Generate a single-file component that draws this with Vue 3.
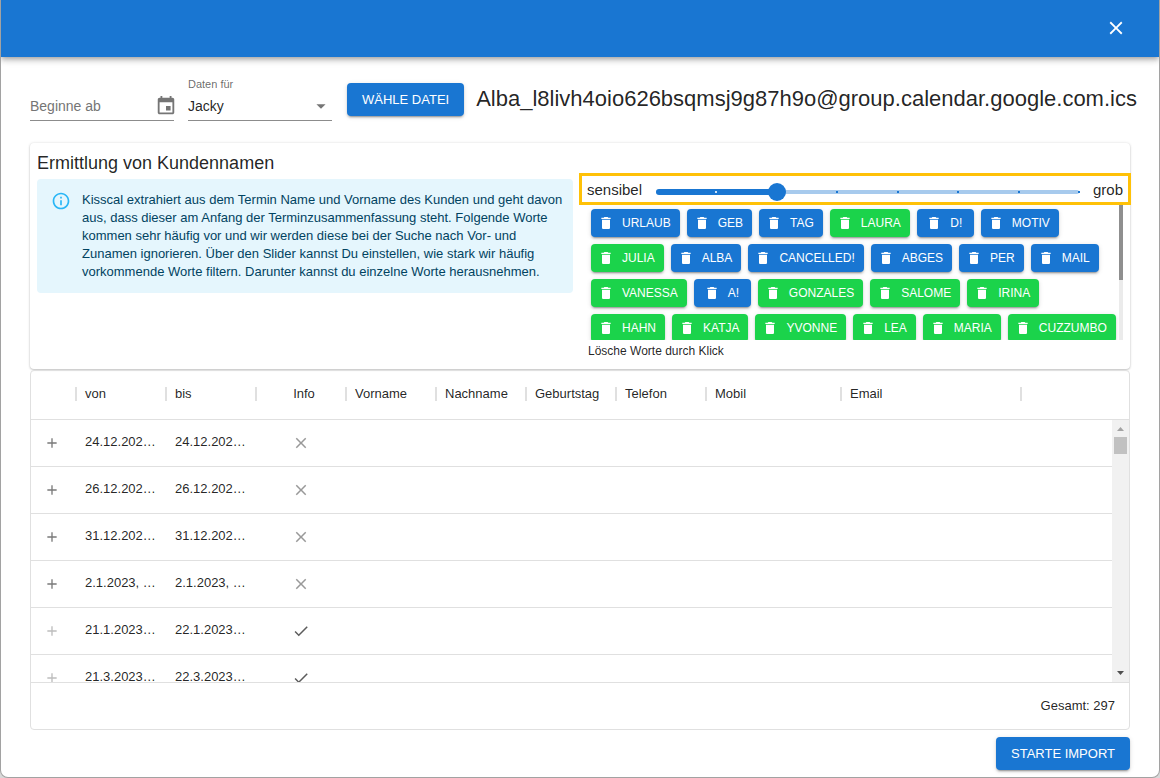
<script setup>
import { ref } from 'vue'

const level = ref(2)
const steps = 7
const person = ref('Jacky')
const startDate = ref('')

const wordRows = [
  [['Urlaub', 0], ['Geb', 0], ['Tag', 0], ['Laura', 1], ['D!', 0], ['Motiv', 0]],
  [['Julia', 1], ['Alba', 0], ['Cancelled!', 0], ['Abges', 0], ['Per', 0], ['Mail', 0]],
  [['Vanessa', 1], ['A!', 0], ['Gonzales', 1], ['Salome', 1], ['Irina', 1]],
  [['Hahn', 1], ['Katja', 1], ['Yvonne', 1], ['Lea', 1], ['Maria', 1], ['Cuzzumbo', 1]],
]

const columns = ['', 'von', 'bis', 'Info', 'Vorname', 'Nachname', 'Geburtstag', 'Telefon', 'Mobil', 'Email']

const rows = [
  { from: '24.12.202…', to: '24.12.202…', ok: false },
  { from: '26.12.202…', to: '26.12.202…', ok: false },
  { from: '31.12.202…', to: '31.12.202…', ok: false },
  { from: '2.1.2023, …', to: '2.1.2023, …', ok: false },
  { from: '21.1.2023…', to: '22.1.2023…', ok: true },
  { from: '21.3.2023…', to: '22.3.2023…', ok: true },
]
</script>

<template>
  <div class="dialog">
    <header class="bar">
      <button class="icon-btn close" aria-label="Schließen">
        <svg viewBox="0 0 24 24" width="22" height="22"><path fill="currentColor" d="M19 6.41 17.59 5 12 10.59 6.41 5 5 6.41 10.59 12 5 17.59 6.41 19 12 13.41 17.59 19 19 17.59 13.41 12z" /></svg>
      </button>
    </header>

    <main class="body">
      <div class="tools">
        <div class="field">
          <input v-model="startDate" type="text" placeholder="Beginne ab" aria-label="Beginne ab">
          <button class="icon-btn cal" aria-label="Datum wählen">
            <svg viewBox="0 0 24 24" width="22" height="22"><path fill="currentColor" d="M17 12h-5v5h5v-5zM16 1v2H8V1H6v2H5c-1.11 0-1.99.9-1.99 2L3 19c0 1.1.89 2 2 2h14c1.1 0 2-.9 2-2V5c0-1.1-.9-2-2-2h-1V1h-2zm3 18H5V8h14v11z" /></svg>
          </button>
        </div>
        <div class="field select">
          <label for="person">Daten für</label>
          <div class="select-line">
            <select id="person" v-model="person"><option>Jacky</option></select>
            <svg class="arrow" viewBox="0 0 24 24" width="22" height="22"><path fill="currentColor" d="m7 10 5 5 5-5z" /></svg>
          </div>
        </div>
        <button class="btn">WÄHLE DATEI</button>
        <h1 class="file">Alba_l8livh4oio626bsqmsj9g87h9o@group.calendar.google.com.ics</h1>
      </div>

      <section class="card">
        <h2>Ermittlung von Kundennamen</h2>
        <div class="halves">
          <div class="alert">
            <svg viewBox="0 0 24 24" width="20" height="20"><path fill="currentColor" d="M11 7h2v2h-2zm0 4h2v6h-2zm1-9C6.48 2 2 6.48 2 12s4.48 10 10 10 10-4.48 10-10S17.52 2 12 2zm0 18c-4.41 0-8-3.59-8-8s3.59-8 8-8 8 3.59 8 8-3.590 8-8 8z" /></svg>
            <p>Kisscal extrahiert aus dem Termin Name und Vorname des Kunden und geht davon aus, dass dieser am Anfang der Terminzusammenfassung steht. Folgende Worte kommen sehr häufig vor und wir werden diese bei der Suche nach Vor- und Zunamen ignorieren. Über den Slider kannst Du einstellen, wie stark wir häufig vorkommende Worte filtern. Darunter kannst du einzelne Worte herausnehmen.</p>
          </div>
          <div class="filter">
            <div class="slider-row">
              <label for="level">sensibel</label>
              <div class="slider">
                <span class="rail"></span>
                <span class="track" :style="{ width: (level / steps) * 100 + '%' }"></span>
                <span v-for="n in steps" :key="n" class="mark" :class="{ on: n < level }" :style="{ left: (n / steps) * 100 + '%' }"></span>
                <input id="level" v-model.number="level" type="range" min="0" :max="steps">
              </div>
              <span>grob</span>
            </div>
            <div class="words">
              <div class="word-list">
                <div v-for="(row, i) in wordRows" :key="i" class="word-row">
                  <button v-for="[word, isName] in row" :key="word" class="chip" :class="{ name: isName }">
                    <svg viewBox="0 0 24 24" width="16" height="16"><path fill="currentColor" d="M6 19c0 1.100.9 2 2 2h8c1.100 0 2-.9 2-2V7H6v12zM19 4h-3.500l-1-1h-5l-1 1H5v2h14V4z" /></svg>
                    <span>{{ word.toUpperCase() }}</span>
                  </button>
                </div>
              </div>
              <div class="mini-scroll"><span></span></div>
            </div>
            <p class="hint">Lösche Worte durch Klick</p>
          </div>
        </div>
      </section>

      <section class="grid">
        <div class="viewport">
          <table>
            <colgroup>
              <col class="w-s"><col v-for="n in 7" :key="n" class="w-m"><col class="w-l"><col class="w-xl"><col>
            </colgroup>
            <thead>
              <tr>
                <th v-for="(c, i) in columns" :key="i" scope="col" :class="{ info: c === 'Info' }"><div>{{ c }}</div></th>
                <td></td>
              </tr>
            </thead>
            <tbody>
              <tr v-for="r in rows" :key="r.from">
                <td class="mid expand">
                  <button class="icon-btn add" :class="{ off: r.ok }" aria-label="Hinzufügen">
                    <svg viewBox="0 0 24 24" width="16" height="16"><path fill="currentColor" d="M19 13h-6v6h-2v-6H5v-2h6V5h2v6h6v2z" /></svg>
                  </button>
                </td>
                <td>{{ r.from }}</td>
                <td>{{ r.to }}</td>
                <td class="mid">
                  <svg v-if="r.ok" class="yes" viewBox="0 0 24 24" width="18" height="18"><path fill="currentColor" d="M9 16.170 4.830 12l-1.420 1.410L9 19 21 7l-1.410-1.410z" /></svg>
                  <svg v-else class="no" viewBox="0 0 24 24" width="18" height="18"><path fill="currentColor" d="M19 6.410 17.590 5 12 10.590 6.410 5 5 6.410 10.590 12 5 17.590 6.410 19 12 13.410 17.590 19 19 17.590 13.410 12z" /></svg>
                </td>
                <td v-for="n in 7" :key="n"></td>
              </tr>
            </tbody>
          </table>
          <div class="scrollbar">
            <svg class="up" viewBox="0 0 7 4" width="7" height="4"><path fill="currentColor" d="M0 4h7L3.500 0z" /></svg>
            <span></span>
            <svg class="down" viewBox="0 0 7 4" width="7" height="4"><path fill="currentColor" d="M0 0h7L3.500 4z" /></svg>
          </div>
        </div>
        <footer>Gesamt: 297</footer>
      </section>

      <div class="actions"><button class="btn">STARTE IMPORT</button></div>
    </main>
  </div>
</template>

<style>
body {
  margin: 0;
  background: #d8d8d8;
}
</style>

<style scoped>
* {
  box-sizing: border-box;
}

.dialog {
  height: 100vh;
  display: flex;
  flex-direction: column;
  overflow: hidden;
  border: 1px solid #a2a2a2;
  border-top: 0;
  border-radius: 0 0 8px 8px;
  background: #fff;
  color: rgba(0, 0, 0, 0.87);
  font-family: "Liberation Sans", Arial, sans-serif;
  font-size: 13px;
}

h1,
h2,
p {
  margin: 0;
  font-weight: 400;
}

button,
input,
select {
  font: inherit;
  color: inherit;
  border: 0;
  padding: 0;
  background: none;
}

svg {
  display: block;
  flex: none;
}

.bar {
  flex: none;
  height: 57px;
  display: flex;
  align-items: center;
  justify-content: flex-end;
  padding: 0 32px 2px 0;
  background: #1976d2;
  color: #fff;
  box-shadow: 0 2px 4px -1px rgba(0, 0, 0, 0.2), 0 4px 5px rgba(0, 0, 0, 0.14), 0 1px 10px rgba(0, 0, 0, 0.12);
}

.body {
  flex: 1;
  min-height: 0;
  display: flex;
  flex-direction: column;
  padding: 20px 29px 7px;
}

.tools {
  display: flex;
  height: 44px;
}

.field {
  flex: none;
  width: 144px;
  margin-right: 14px;
  display: flex;
  align-items: flex-end;
  border-bottom: 1px solid #8c8c8c;
  font-size: 14px;
}

.field input {
  flex: 1;
  min-width: 0;
  height: 28px;
  outline: 0;
}

.field input::placeholder {
  color: #757575;
  opacity: 1;
}

.cal {
  color: #757575;
  margin: 0 -3px 3px 0;
}

.select {
  flex-direction: column;
  align-items: stretch;
  justify-content: space-between;
  margin-right: 15px;
}

.select label {
  font-size: 11px;
  line-height: 14px;
  color: rgba(0, 0, 0, 0.6);
}

.select-line {
  display: flex;
  align-items: center;
  height: 28px;
}

.select select {
  flex: 1;
  appearance: none;
  outline: 0;
}

.arrow {
  color: #757575;
  pointer-events: none;
}

.btn {
  flex: none;
  height: 33px;
  padding: 0 15px 1px;
  border-radius: 4px;
  background: #1976d2;
  color: #fff;
  white-space: nowrap;
  box-shadow: 0 3px 1px -2px rgba(0, 0, 0, 0.2), 0 2px 2px rgba(0, 0, 0, 0.14), 0 1px 5px rgba(0, 0, 0, 0.12);
}

.tools .btn {
  margin: 6px 12px 0 0;
}

.file {
  margin-top: 8px;
  font-size: 22px;
  line-height: 28px;
  white-space: nowrap;
}

.card {
  margin-top: 22px;
  height: 226px;
  padding: 10px 0 0 7px;
  border-radius: 4px;
  box-shadow: 0 1px 2px rgba(0, 0, 0, 0.2), 0 0 3px rgba(0, 0, 0, 0.12);
}

.card h2 {
  font-size: 18px;
  line-height: 20px;
}

.halves {
  display: grid;
  grid-template-columns: 536fr 552fr;
  column-gap: 6px;
  margin-right: -1px;
}

.alert {
  align-self: start;
  margin-top: 6px;
  display: flex;
  gap: 11px;
  padding: 12px 6px 12px 14px;
  border-radius: 4px;
  background: #e5f6fd;
  color: #014361;
  line-height: 18px;
}

.alert svg {
  color: #29b6f6;
}

.filter {
  min-width: 0;
}

.slider-row {
  height: 32px;
  display: flex;
  align-items: center;
  gap: 14px;
  padding: 0 5px;
  border: 3px solid #ffc107;
  font-size: 15px;
}

.slider {
  position: relative;
  flex: 1;
  height: 18px;
  margin-top: 5px;
}

.rail,
.track {
  position: absolute;
  left: 0;
  border-radius: 3px;
}

.rail {
  top: 7px;
  right: 0;
  height: 4px;
  background: #a7caed;
}

.track {
  top: 6px;
  height: 6px;
  background: #1976d2;
}

.mark {
  position: absolute;
  top: 8px;
  width: 2px;
  height: 2px;
  margin-left: -1px;
  background: #1976d2;
}

.mark.on {
  background: #d0e3f6;
}

.slider input {
  position: absolute;
  left: -9px;
  top: 0;
  width: calc(100% + 18px);
  height: 18px;
  margin: 0;
  appearance: none;
}

.slider input::-webkit-slider-thumb {
  appearance: none;
  width: 18px;
  height: 18px;
  border-radius: 50%;
  background: #1976d2;
}

.words {
  height: 135px;
  display: flex;
  justify-content: space-between;
  padding: 0 8px 0 9px;
  overflow: hidden;
}

.word-list {
  padding: 4px 3px 0;
}

.word-row {
  display: flex;
  gap: 7px;
  margin-bottom: 7px;
}

.chip {
  min-width: 57px;
  height: 28px;
  padding: 0 9px 1px 7px;
  display: flex;
  align-items: center;
  justify-content: center;
  gap: 8px;
  border-radius: 4px;
  background: #1976d2;
  color: #fff;
  font-size: 12px;
  box-shadow: 0 3px 1px -2px rgba(0, 0, 0, 0.2), 0 2px 2px rgba(0, 0, 0, 0.14), 0 1px 5px rgba(0, 0, 0, 0.12);
}

.chip.name {
  background: #1bd34b;
}

.mini-scroll {
  width: 4px;
  background: #ebebeb;
}

.mini-scroll span {
  display: block;
  height: 75px;
  background: #8f8f8f;
}

.hint {
  padding-left: 9px;
  font-size: 12px;
  line-height: 22px;
}

.grid {
  flex: 1;
  min-height: 0;
  display: flex;
  flex-direction: column;
  margin-top: 1px;
  border: 1px solid #e0e0e0;
  border-radius: 4px;
}

.viewport {
  position: relative;
  flex: 1;
  min-height: 0;
  overflow: hidden;
}

table {
  width: 100%;
  table-layout: fixed;
  border-collapse: separate;
  border-spacing: 0;
}

.w-s {
  width: 46px;
}

.w-m {
  width: 90px;
}

.w-l {
  width: 135px;
}

.w-xl {
  width: 180px;
}

th,
td {
  height: 47px;
  padding: 0 0 2px 8px;
  border-bottom: 1px solid #e0e0e0;
  text-align: left;
  font-weight: 400;
  line-height: 14px;
  white-space: nowrap;
}

thead th {
  height: 49px;
}

th div {
  height: 14px;
  border-right: 2px solid #e0e0e0;
}

th.info div {
  text-align: center;
  padding-right: 2px;
}

td.mid {
  padding: 0 2px 1px 0;
}

td.expand {
  padding-right: 4px;
}

td.mid svg,
td.mid button {
  margin: 0 auto;
}

.icon-btn {
  display: block;
  cursor: pointer;
}

.add {
  color: #7a7a7a;
}

.add.off {
  color: #bdbdbd;
}

.no {
  color: #999;
}

.yes {
  color: #5c5c5c;
}

.scrollbar {
  position: absolute;
  top: 49px;
  right: 0;
  bottom: 0;
  width: 17px;
  display: flex;
  flex-direction: column;
  align-items: center;
  padding: 7px 0;
  background: #f1f1f1;
}

.scrollbar span {
  width: 13px;
  height: 17px;
  margin-top: 6px;
  background: #c1c1c1;
}

.up {
  color: #a3a3a3;
}

.down {
  margin-top: auto;
  color: #505050;
}

footer {
  flex: none;
  height: 47px;
  display: flex;
  align-items: center;
  justify-content: flex-end;
  padding: 0 14px 1px 0;
  border-top: 1px solid #e0e0e0;
}

.actions {
  display: flex;
  justify-content: flex-end;
  margin-top: 7px;
}
</style>
